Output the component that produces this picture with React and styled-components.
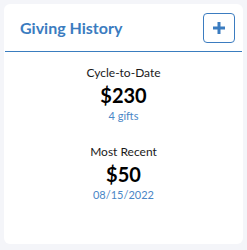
import React from "react";
import styled, { createGlobalStyle } from "styled-components";

const Global = createGlobalStyle`
  html, body { margin: 0; padding: 0; background: #f4f5f9; }
  body { font-family: Lato, "Open Sans", sans-serif; }
`;

const Page = styled.div`
  padding: 4px;
  width: 239px;
`;

const Card = styled.section`
  background: #ffffff;
  border-radius: 6px;
  height: 240px;
  display: flex;
  flex-direction: column;
`;

const Header = styled.header`
  height: 47px;
  display: flex;
  align-items: center;
  justify-content: space-between;
  padding: 0 8px 0 15px;
  margin: 0 1px;
  border-bottom: 1px solid #3a7dbf;
`;

const Title = styled.h2`
  margin: 0;
  font-size: 16px;
  font-weight: 700;
  color: #3b7cc0;
`;

const AddButton = styled.button`
  width: 32px;
  height: 30px;
  box-sizing: border-box;
  border: 1px solid #3b7cc0;
  border-radius: 4px;
  background: #fff;
  display: flex;
  align-items: center;
  justify-content: center;
  padding: 0;
  margin-right: -1px;
`;

const Body = styled.div`
  display: flex;
  flex-direction: column;
  align-items: center;
  padding-top: 13px;
  gap: 21px;
`;

const Stat = styled.div`
  display: flex;
  flex-direction: column;
  align-items: center;
`;

const Label = styled.div`
  font-size: 12px;
  color: #1a1a1a;
  line-height: 15px;
`;

const Value = styled.div`
  font-size: 20px;
  font-weight: 700;
  color: #000;
  line-height: 24px;
  margin-top: 3px;
`;

const Sub = styled.div`
  font-size: 11px;
  color: #4a86c6;
  line-height: 14px;
  margin-top: 2px;
`;

export default function App() {
  return (
    <>
      <Global />
      <Page>
        <Card>
          <Header>
            <Title>Giving History</Title>
            <AddButton aria-label="Add">
              <svg width="14" height="14" viewBox="0 0 14 14">
                <path d="M7 1v12M1 7h12" stroke="#3b7cc0" strokeWidth="3" />
              </svg>
            </AddButton>
          </Header>
          <Body>
            <Stat>
              <Label>Cycle-to-Date</Label>
              <Value>$230</Value>
              <Sub>4 gifts</Sub>
            </Stat>
            <Stat>
              <Label>Most Recent</Label>
              <Value>$50</Value>
              <Sub>08/15/2022</Sub>
            </Stat>
          </Body>
        </Card>
      </Page>
    </>
  );
}
